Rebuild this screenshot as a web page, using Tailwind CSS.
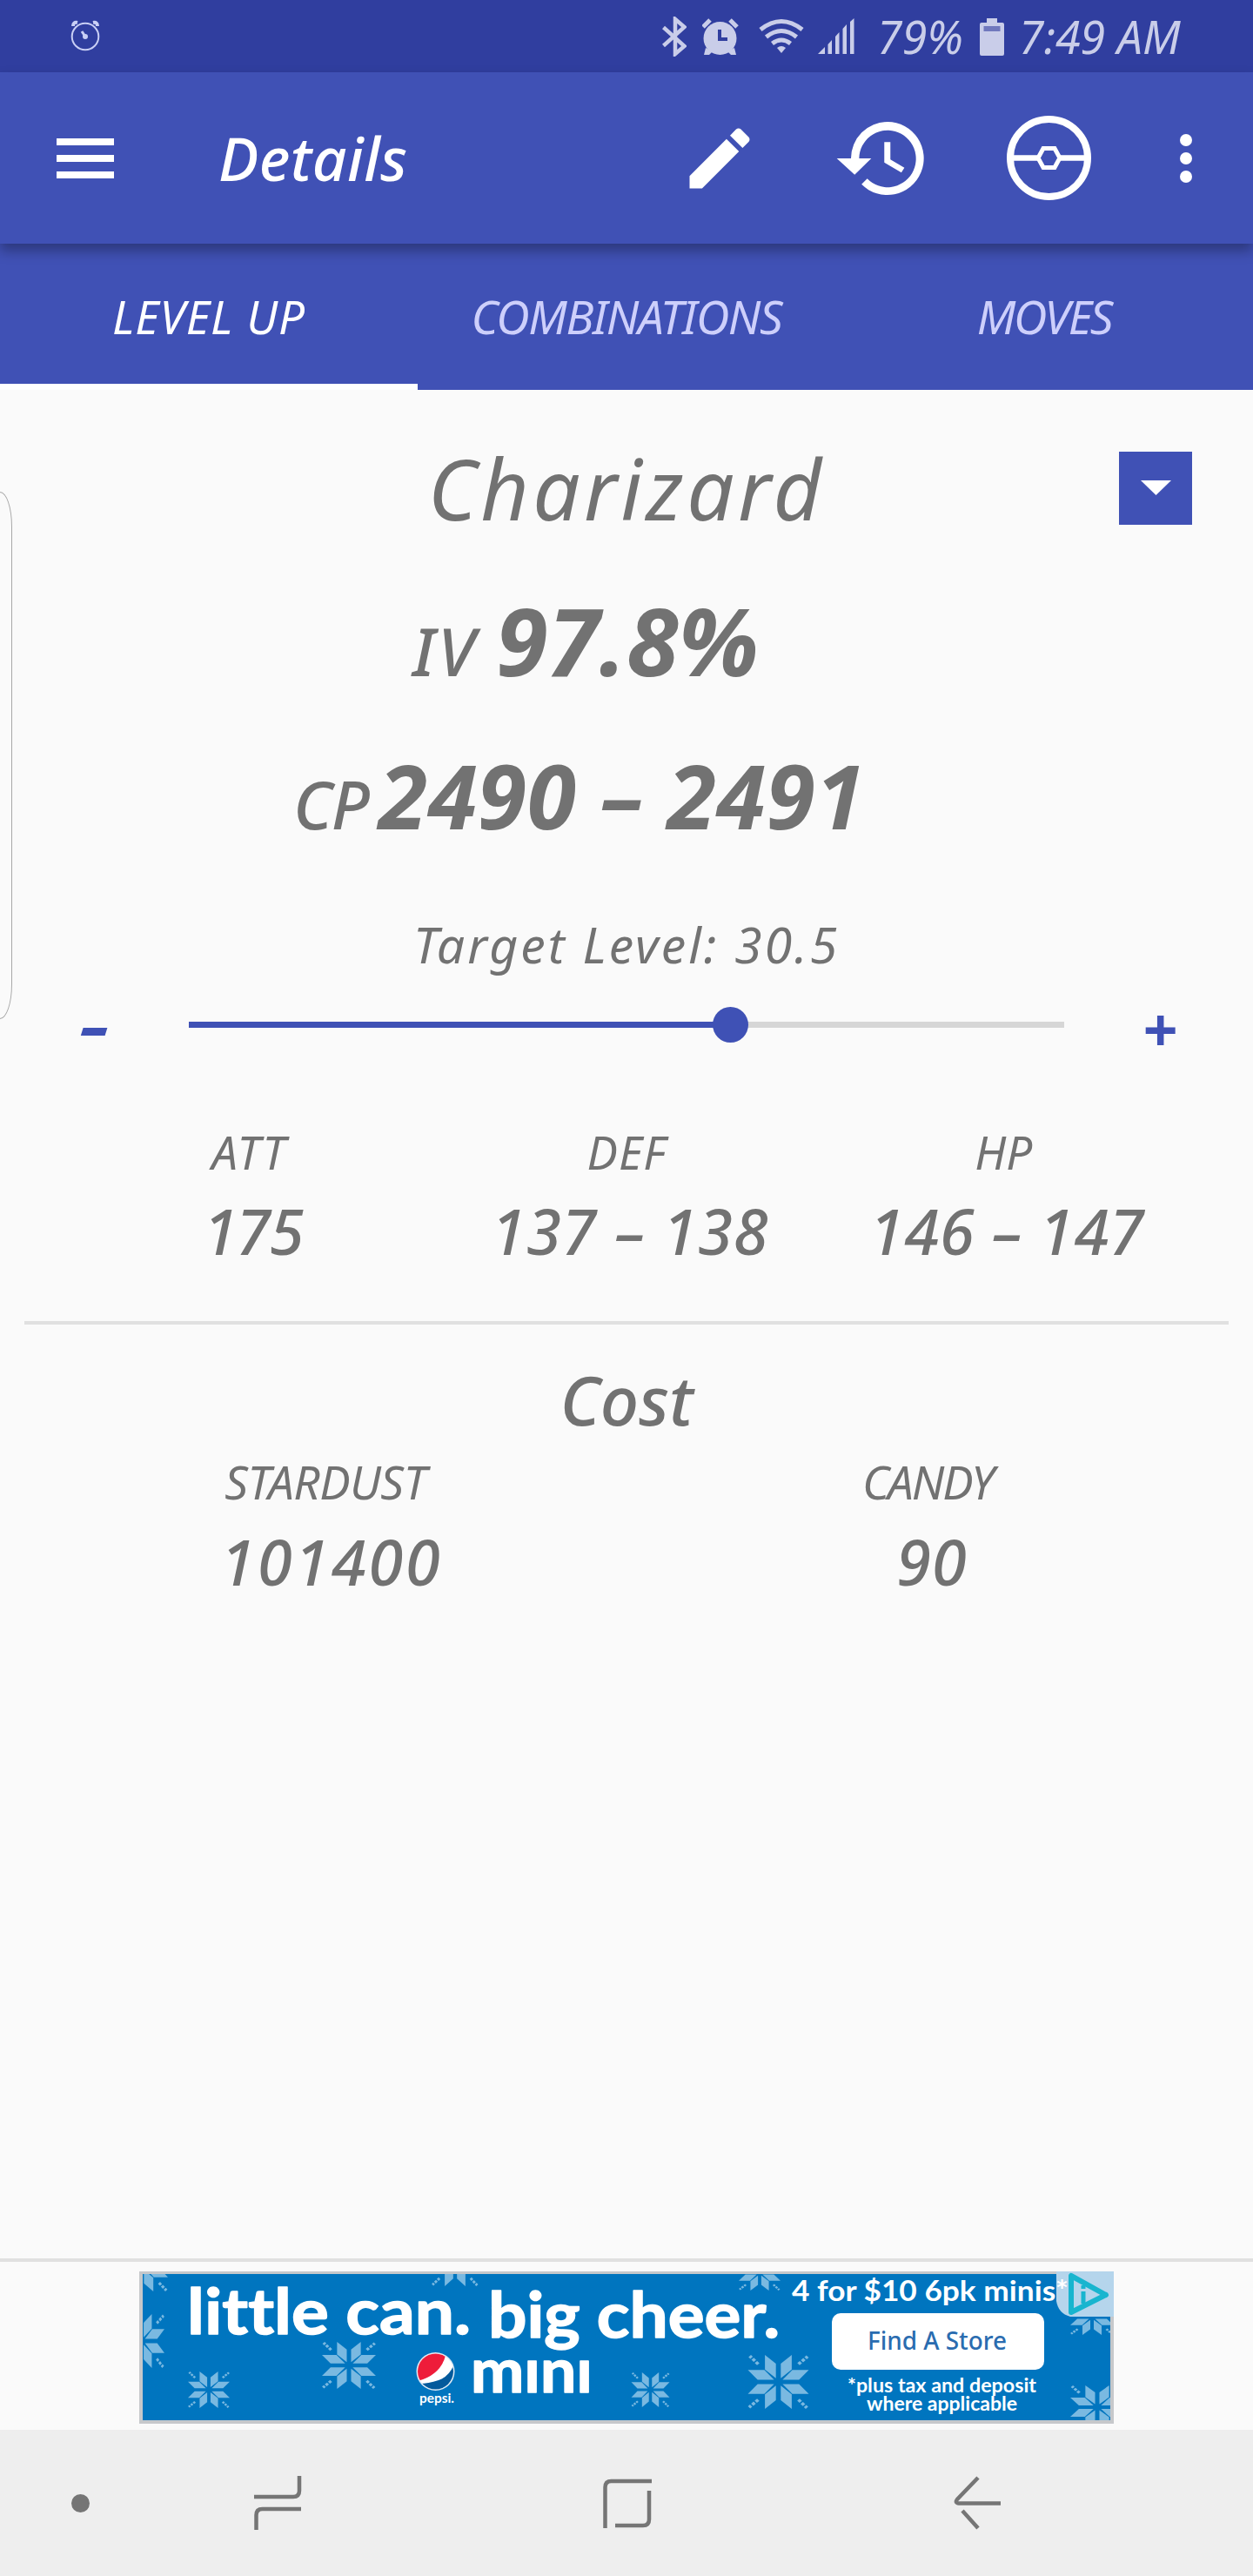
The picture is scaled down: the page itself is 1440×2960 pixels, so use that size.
<!DOCTYPE html>
<html lang="en">
<head>
<meta charset="utf-8">
<title>Details</title>
<script src="https://cdn.jsdelivr.net/npm/@tailwindcss/browser@4"></script>
</head>
<body class="bg-[#fafafa]">
<div class="relative flex h-[2960px] w-[1440px] flex-col overflow-hidden bg-[#fafafa] font-['Noto_Sans',sans-serif] text-[#727272] italic whitespace-nowrap">

  <!-- Status bar -->
  <div class="flex h-[83px] shrink-0 items-center bg-[#303e9f] pr-[82px] pl-[81px] text-[#c9cde9]">
    <svg class="h-[38px] w-[34px]" viewBox="81 24 34 38" fill="none" stroke="#c9cff5" stroke-width="2"><circle cx="98" cy="43" r="15.3"/><path d="M84 31q0-5 5-4M112 31q0-5-5-4" stroke-width="4"/><circle cx="98" cy="43" r="2" fill="#c9cff5"/><path d="M98 43l-4-6" stroke-width="3"/></svg>
    <div class="ml-auto flex items-center">
      <svg class="h-[46px] w-[28px]" viewBox="762 20 28 46" fill="none" stroke="currentColor" stroke-width="4.500"><path d="M763.500 32.500L787.500 54 777 63V23L787.500 32 763.500 53.500"/></svg>
      <svg class="ml-[18px] h-[44px] w-[42px]" viewBox="808 20 42 44"><g fill="currentColor"><circle cx="828.500" cy="44" r="19"/><path d="M812 55l-2 8h6l4-4zM845 55l2 8h-6l-4-4z"/></g><path d="M809 31l8-8M848 31l-8-8" stroke="currentColor" stroke-width="5"/><path d="M828 34v11h9" fill="none" stroke="#303e9f" stroke-width="4"/></svg>
      <svg class="ml-[23px] h-[42px] w-[52px]" viewBox="872 21 52 42" fill="none" stroke="currentColor" stroke-width="5"><path d="M874 34q24-19 48 0M880.500 42.500q17.500-14 35 0M887.500 50q10.500-8 21 0"/><path d="M898 61l-5-6q5-4 10 0z" fill="currentColor" stroke="none"/></svg>
      <svg class="ml-[16px] h-[42px] w-[42px]" viewBox="940 21 42 42" fill="currentColor"><path d="M940 62l8-8v8zM951.500 51l4.500-5v16h-4.500zM960 42l4.500-5v25H960zM968.500 33l4.500-5v34h-4.500zM977 25l4.500-4v41H977z"/></svg>
      <span class="ml-[26px] w-[102px] text-[52px] leading-none">79%</span>
      <svg class="ml-[16px] h-[44px] w-[28px]" viewBox="1126 19 28 44"><path d="M1134 20h12v5h6q2 0 2 2v34q0 2-2 2h-24q-2 0-2-2V27q0-2 2-2h6z" fill="currentColor"/><path d="M1130.500 29h19v6h-19z" fill="#7078bd"/></svg>
      <span class="ml-[17px] w-[187px] text-[52px] leading-none">7:49 AM</span>
    </div>
  </div>

  <!-- Toolbar -->
  <header class="z-10 flex h-[197px] shrink-0 items-center bg-[#4051b5] pr-[70px] pl-[65px] text-white shadow-[0_8px_14px_rgba(0,0,0,0.32)]">
    <div class="flex w-[66px] flex-col gap-[11px]"><div class="h-2 bg-white"></div><div class="h-2 bg-white"></div><div class="h-2 bg-white"></div></div>
    <h1 class="ml-[120px] text-[69px] leading-none font-medium tracking-[.5px]">Details</h1>
    <svg class="ml-auto size-[92px]" viewBox="0 0 24 24" fill="currentColor"><path d="M3 17.250V21h3.750L17.810 9.940l-3.750-3.750L3 17.250zM20.710 7.040c.39-.39.39-1.020 0-1.410l-2.340-2.340c-.39-.39-1.020-.39-1.410 0l-1.830 1.830 3.750 3.750 1.830-1.830z"/></svg>
    <svg class="ml-[84px] size-[112px]" viewBox="0 0 24 24" fill="currentColor"><path d="M13.500 3a9 9 0 0 0-9 9H1l4.400 4L9.500 12h-3a7 7 0 1 1 2 5l-1.400 1.400A9 9 0 1 0 13.500 3zM12.700 8v5l4.200 2.500.75-1.200-3.450-2.050V8z"/></svg>
    <svg class="ml-[88px] size-[97px]" viewBox="0 0 97 97" fill="none" stroke="currentColor"><circle cx="48.500" cy="48.500" r="44.500" stroke-width="8"/><path d="M5 48.500h31M61 48.500h31" stroke-width="6.500"/><path d="M42 37.500h13l6 11-6 11H42l-6-11z" stroke-width="5"/></svg>
    <div class="ml-[102px] flex w-[14px] flex-col gap-[7px]"><i class="size-[14px] rounded-full bg-white"></i><i class="size-[14px] rounded-full bg-white"></i><i class="size-[14px] rounded-full bg-white"></i></div>
  </header>

  <!-- Tabs -->
  <nav class="grid h-[168px] shrink-0 grid-cols-3 bg-[#4051b5] text-center text-[53px] leading-[168px] text-[#cdcffb]">
    <div class="h-[168px] border-b-[7px] border-white tracking-[1px] text-white">LEVEL UP</div>
    <div class="tracking-[-1.3px]">COMBINATIONS</div>
    <div class="tracking-[-2.2px]">MOVES</div>
  </nav>

  <!-- Pokémon summary -->
  <main class="flex grow flex-col">
    <div class="grid h-[225px] grid-cols-3 items-center">
      <h2 class="col-start-2 text-center text-[96px] leading-none tracking-[4.2px]">Charizard</h2>
      <div class="mr-[70px] grid size-[84px] place-items-center justify-self-end bg-[#4051b5]"><svg class="h-[17px] w-[35px]" viewBox="0 0 35 17"><path d="M0 0h35L17.500 17z" fill="#fff"/></svg></div>
    </div>
    <div class="flex h-[130px] items-baseline pl-[474px] leading-[130px]"><span class="w-[96px] text-[76px] font-medium tracking-[3px]">IV</span><span class="text-[108px] leading-[126px] font-bold">97.8%</span></div>
    <div class="flex h-[232px] items-center pl-[337px]"><div class="flex items-baseline leading-[206px]"><span class="w-[98px] text-[76px] font-medium tracking-[-1.5px]">CP</span><span class="text-[102px] font-bold tracking-[.7px]">2490 – 2491</span></div></div>
    <div class="h-[101px] text-center text-[57px] leading-[101px] tracking-[3px]">Target Level: 30.5</div>

    <div class="mt-[30px] flex h-[22px] items-center text-[#3f51b5]">
      <span class="ml-[91px] w-[126px] text-[72px] leading-none font-bold"><span class="inline-block origin-left scale-x-150">-</span></span>
      <div class="relative flex h-[7px] w-[1006px] bg-[#d6d6d6]"><div class="h-full bg-[#3f51b5]" style="width:62%"></div><div class="absolute top-[-17px] left-[602px] size-[41px] rounded-full bg-[#3f51b5]"></div></div>
      <span class="ml-[90px] pt-[9px] text-[70px] leading-none font-bold">+</span>
    </div>

    <div class="mt-[104px] grid h-[64px] grid-cols-3 px-[70px] text-center text-[53px] leading-[64px]">
      <div class="tracking-[2px]">ATT</div><div class="tracking-[1px]">DEF</div><div>HP</div>
    </div>
    <div class="grid h-[116px] grid-cols-3 pr-[66px] pl-[74px] text-center text-[72px] leading-[116px] font-medium">
      <div class="tracking-[-1.5px]">175</div><div class="tracking-[1px]">137 – 138</div><div class="tracking-[.7px]">146 – 147</div>
    </div>
    <div class="mx-[28px] mt-[46px] h-[4px] bg-[#e0e0e0]"></div>

    <h3 class="mt-[36px] h-[100px] text-center text-[78px] leading-[100px] font-medium">Cost</h3>
    <div class="grid h-[90px] grid-cols-2 px-[28px] text-center text-[53px] leading-[90px]">
      <div class="tracking-[-.5px]">STARDUST</div><div class="tracking-[-2px]">CANDY</div>
    </div>
    <div class="grid h-[92px] grid-cols-2 pr-[24px] pl-[36px] text-center text-[72px] leading-[92px] font-medium">
      <div class="tracking-[2.8px]">101400</div><div class="tracking-[1px]">90</div>
    </div>
  </main>

  <!-- Ad banner -->
  <div class="flex h-[197px] shrink-0 justify-center border-t-4 border-[#e0e0e0] pt-[11px]">
    <svg class="h-[175px] w-[1120px] not-italic [font-variant-ligatures:none]" viewBox="160 2610 1120 175" font-family="Lato, sans-serif" fill="#fff">
      <defs>
        <pattern id="knit" width="3.500" height="3.500" patternUnits="userSpaceOnUse"><rect width="3.500" height="3.500" fill="#4a9fd3"/><rect width="2.600" height="2.600" fill="#8cc4e7"/></pattern>
        <g id="q"><path d="M8-14V-68L44-100V-46zM14-8H68L100-44H46z"/><path d="M66-66L96-94" stroke="#7ab9e1" stroke-width="11" stroke-dasharray="11 5"/></g>
        <g id="flake"><use href="#q"/><use href="#q" transform="rotate(90)"/><use href="#q" transform="rotate(180)"/><use href="#q" transform="rotate(270)"/></g>
        <clipPath id="ad"><path d="M164 2613h1112v168H164z"/></clipPath>
        <clipPath id="ball"><circle cx="500.500" cy="2725" r="20.500"/></clipPath>
      </defs>
      <path d="M160 2610h1120v175H160z" fill="#c6c8cb"/>
      <path d="M164 2613h1112v168H164z" fill="#0075bf"/>
      <g clip-path="url(#ad)" fill="#7ab9e1">
        <use href="#flake" transform="translate(240 2746) scale(.24 .21)"/>
        <use href="#flake" transform="translate(401 2718) scale(.31 .27)"/>
        <use href="#flake" transform="translate(747.500 2746) scale(.22 .2)"/>
        <use href="#flake" transform="translate(894.500 2737) scale(.35 .31)"/>
        <use href="#flake" transform="translate(163 2690) scale(.26 .31)"/>
        <use href="#flake" transform="translate(163 2604) scale(.3 .29)"/>
        <use href="#flake" transform="translate(523 2600) scale(.27 .27)"/>
        <use href="#flake" transform="translate(873 2612) scale(.24 .2)"/>
        <use href="#flake" transform="translate(1255 2663) scale(.25 .2)"/>
        <use href="#flake" transform="translate(1261 2766) scale(.31 .25)"/>
      </g>
      <g font-weight="700" stroke="#fff" stroke-width="1.500" stroke-linejoin="round">
        <text x="215" y="2682" font-size="73" textLength="326" lengthAdjust="spacingAndGlyphs">little can.</text>
        <text x="561" y="2686" font-size="73" textLength="335" lengthAdjust="spacingAndGlyphs">big cheer.</text>
        <text x="541" y="2749" font-size="71" textLength="140" lengthAdjust="spacingAndGlyphs">mını</text>
      </g>
      <circle cx="500.500" cy="2725" r="22" fill="#dfeaf5"/>
      <g clip-path="url(#ball)"><path d="M478 2702h46v46h-46z" fill="#fff"/><path d="M478 2702h35q-4 26-33 34z" fill="#ee1c3a"/><path d="M524 2710q-5 20-20 25-12 4-22 4l-2 12h44z" fill="#045a9c"/></g>
      <text x="482" y="2761" font-size="15" font-weight="700" textLength="40" lengthAdjust="spacingAndGlyphs">pepsi.</text>
      <path d="M1214 2610h66v52h-50q-14-4-16-18z" fill="#b5d5ec"/>
      <text x="910" y="2644" font-size="33" font-weight="700" textLength="318" lengthAdjust="spacingAndGlyphs">4 for $10 6pk minis*</text>
      <path d="M1231 2615v42l40-20z" fill="none" stroke="#18b5cf" stroke-width="6" stroke-linejoin="round"/><path d="M1245 2633v14M1245 2626v4" stroke="#18b5cf" stroke-width="5"/>
      <rect x="956" y="2658" width="244" height="65" rx="10"/>
      <text x="997" y="2700" font-family="'Noto Sans', sans-serif" font-size="29" font-weight="500" fill="#2a6cb0" textLength="160" lengthAdjust="spacingAndGlyphs">Find A Store</text>
      <text x="974" y="2749" font-size="22" font-weight="700" textLength="217" lengthAdjust="spacingAndGlyphs">*plus tax and deposit</text>
      <text x="996" y="2770" font-size="22" font-weight="700" textLength="173" lengthAdjust="spacingAndGlyphs">where applicable</text>
    </svg>
  </div>

  <!-- System navigation -->
  <div class="flex h-[168px] shrink-0 items-center bg-[#eee] pl-[82px] text-[#757575]">
    <i class="size-[21px] rounded-full bg-current"></i>
    <svg class="ml-[187px] h-[64px] w-[58px]" viewBox="290 2845 58 64" fill="none" stroke="currentColor" stroke-width="4.500"><path d="M344 2846v17q0 7-7 7h-45M294.500 2908v-17q0-7 7-7H346"/></svg>
    <svg class="ml-[343px] h-[62px] w-[60px]" viewBox="691 2846 60 62" fill="none" stroke="currentColor" stroke-width="4.500"><path d="M695.500 2906v-47q0-7 7-7H749M746 2863v33q0 7-7 7h-32"/></svg>
    <svg class="ml-[345px] h-[62px] w-[56px]" viewBox="1096 2846 56 62" fill="none" stroke="currentColor" stroke-width="4.500"><path d="M1124 2848l-24 25q-3 4 2 4.500h48M1106 2886l18 20"/></svg>
  </div>

  <!-- Edge panel handle -->
  <div class="absolute top-[565px] left-[-16px] h-[606px] w-[30px] rounded-[14px/40px] border-[1.5px] border-[#a8a8a8]"></div>
</div>
</body>
</html>
